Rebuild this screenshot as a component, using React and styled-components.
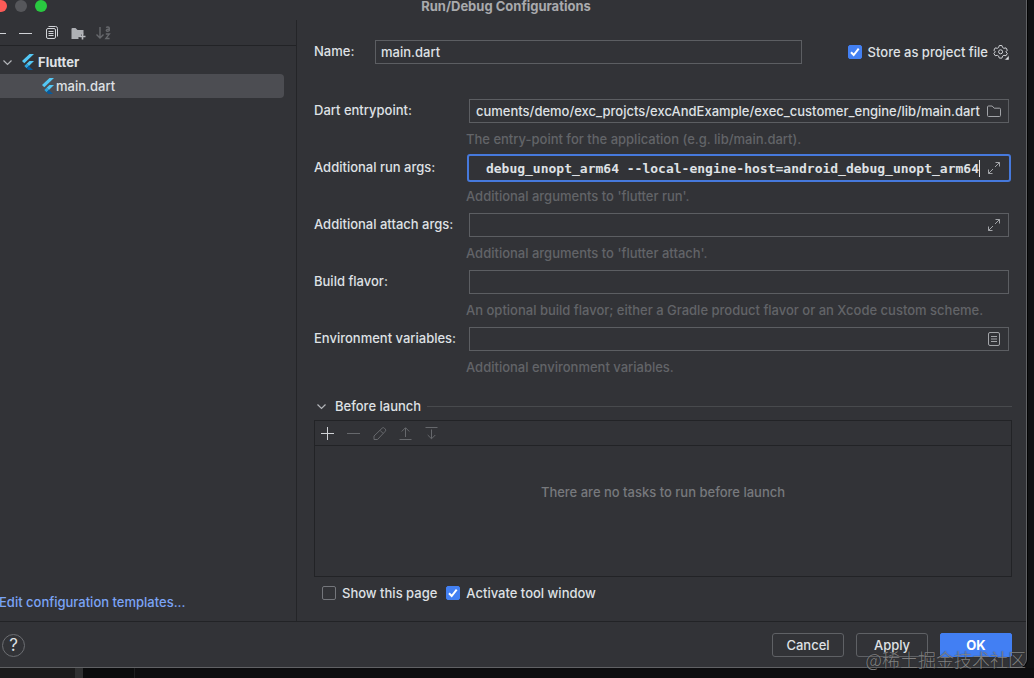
import React from "react";
import styled, { createGlobalStyle } from "styled-components";
import { useState } from "react";

const GlobalStyle = createGlobalStyle`
  * {
    box-sizing: border-box;
  }
  body {
    margin: 0;
    background: #101113;
    color: #dfe1e5;
    font-family: Inter, "Liberation Sans", sans-serif;
    font-size: 13px;
    font-weight: 500;
    line-height: 16px;
  }
`;

const Desktop = styled.div`
  position: relative;
  display: flex;
  flex-direction: column;
  min-height: 100vh;
  overflow: hidden;
`;

const Window = styled.div`
  flex: 1;
  display: flex;
  flex-direction: column;
  margin: 0 7px 0 -15px;
  background: #323337;
  border: solid #606164;
  border-width: 0 1px 1px 0;
  border-radius: 0 0 9px 9px;
  box-shadow: 0 0 0 1px #050505;
`;

const Behind = styled.div`
  display: flex;
  height: 10px;
`;
const BehindPart = styled.div`
  flex: ${(props) => props.$grow || 0} 0 ${(props) => props.$size || 0}px;
  background: ${(props) => props.$color};
`;

const TitleBar = styled.header`
  display: flex;
  align-items: flex-start;
  height: 20px;
  padding-left: 10px;
`;
const Lights = styled.div`
  display: flex;
  flex: 1;
  gap: 8px;
`;
const Light = styled.span`
  width: 12px;
  height: 12px;
  border-radius: 50%;
  background: ${(props) => props.$color};
`;
const Title = styled.h1`
  margin: 0 9px 0 0;
  font-size: 13px;
  font-weight: 700;
  line-height: 12px;
  color: #a9aaad;
`;
const TitleSpacer = styled.div`
  flex: 1;
`;

const Main = styled.div`
  flex: 1;
  display: flex;
`;

const Sidebar = styled.aside`
  display: flex;
  flex-direction: column;
  flex: 0 0 312px;
  border-right: 1px solid #242528;
`;
const Toolbar = styled.div`
  display: flex;
  align-items: center;
  gap: 10px;
  height: ${(props) => props.$height || 26}px;
  padding-left: ${(props) => props.$indent || 6}px;
  border-bottom: 1px solid #222326;
`;
const IconButton = styled.button`
  display: flex;
  width: 16px;
  height: 16px;
  padding: 0;
  border: 0;
  background: none;
  color: ${(props) => (props.disabled ? "#66686c" : "#d0d2d6")};
`;
const Svg = styled.svg`
  display: block;
  flex: none;
  fill: none;
  stroke: currentColor;
  overflow: visible;
`;

const Tree = styled.div`
  flex: 1;
  padding-top: 4px;
`;
const TreeRow = styled.div`
  display: flex;
  align-items: center;
  gap: ${(props) => (props.$selected ? 1 : 3)}px;
  height: 24px;
  margin-right: 12px;
  padding-left: ${(props) => props.$indent}px;
  border-radius: 4px;
  background: ${(props) => (props.$selected ? "#4c4d52" : "none")};
  font-weight: ${(props) => (props.$bold ? 700 : 500)};
`;
const TreeArrow = styled.span`
  width: 13px;
  color: #b4b6ba;
`;
const TemplatesLink = styled.a`
  padding: 0 0 11px 14px;
  color: #7ba4f6;
  text-decoration: none;
`;

const Content = styled.main`
  flex: 1;
  display: flex;
  flex-direction: column;
  min-width: 0;
  padding: 20px 14px 20px 17px;
`;
const NameRow = styled.div`
  display: flex;
  align-items: center;
  margin: 0 3px 35px 0;
`;
const NameLabel = styled.label`
  width: 61px;
  line-height: 22px;
  align-self: flex-start;
`;
const NameField = styled.div`
  flex: 1;
  display: flex;
`;
const StoreOption = styled.div`
  display: flex;
  align-items: center;
  gap: 5px;
  margin-left: 46px;
  color: #c4c6ca;
`;

const Form = styled.form`
  display: grid;
  grid-template-columns: 155px 1fr;
  padding-right: 3px;
`;
const FieldLabel = styled.label`
  line-height: 22px;
`;
const FieldCell = styled.div`
  min-width: 0;
  height: 57px;
`;
const Field = styled.div`
  flex: 1;
  display: flex;
  align-items: center;
  height: 24px;
  padding: 0 6px 0 5px;
  border: 1px solid ${(props) => (props.$active ? "#323337" : "#5c5e62")};
  outline: ${(props) => (props.$active ? "2px solid #4679dc" : "none")};
  border-radius: ${(props) => (props.$active ? 1 : 0)}px;
  color: #a2a4a8;
`;
const Input = styled.input`
  flex: 1;
  min-width: 0;
  height: 20px;
  padding: 0;
  border: 0;
  outline: 0;
  background: none;
  color: #dfe1e5;
  font-family: ${(props) =>
    props.$mono ? '"DejaVu Sans Mono", "Liberation Mono", monospace' : "inherit"};
  font-size: 13px;
  font-weight: ${(props) => (props.$mono ? 700 : 500)};
  text-align: ${(props) => (props.$end ? "right" : "left")};
`;
const Caret = styled.span`
  width: 1px;
  height: 17px;
  background: #dfe1e5;
`;
const FieldIcon = styled.span`
  margin-left: 6px;
`;
const Hint = styled.p`
  margin: 8px 0 0 -3px;
  color: #626468;
  white-space: nowrap;
`;

const SectionTitle = styled.div`
  display: flex;
  align-items: center;
  gap: 6px;
  margin: 14px 0 6px;
  color: #dfe1e5;

  &::after {
    content: "";
    flex: 1;
    border-top: 1px solid #484a4d;
  }
`;
const SectionArrow = styled.span`
  width: 15px;
  padding-left: 3px;
  color: #b4b6ba;
`;
const Tasks = styled.section`
  flex: 1;
  margin-bottom: 8px;
  border: 1px solid #222326;
`;
const NoTasks = styled.p`
  margin: 0;
  padding: 38px 0;
  color: #77797d;
  text-align: center;
`;

const Options = styled.div`
  display: flex;
  gap: 9px;
  padding-left: 8px;
`;
const CheckLabel = styled.label`
  display: flex;
  align-items: center;
  gap: 6px;
  color: #dfe1e5;
`;
const CheckBox = styled.span`
  position: relative;
  width: 14px;
  height: 14px;
  color: #ffffff;
`;
const CheckInput = styled.input`
  appearance: none;
  display: block;
  width: 14px;
  height: 14px;
  margin: 0;
  border: 1px solid #74767b;
  border-radius: 2px;

  &:checked {
    border-color: #4380f2;
    background: #4380f2;
  }
`;
const CheckMark = styled.svg`
  position: absolute;
  inset: 0;
  fill: none;
  stroke: currentColor;
  stroke-width: 2;
  pointer-events: none;
`;

const Footer = styled.footer`
  display: flex;
  align-items: center;
  gap: 12px;
  padding: 11px 14px 10px 17px;
  border-top: 1px solid #222326;
`;
const HelpButton = styled.button`
  width: 23px;
  height: 23px;
  margin-right: auto;
  padding: 0;
  border: 1px solid #6c6e72;
  border-radius: 50%;
  background: none;
  color: #dfe1e5;
  font: 400 17px/20px Inter, "Liberation Sans", sans-serif;
`;
const Button = styled.button`
  width: 72px;
  height: 24px;
  padding: 0;
  border: 1px solid ${(props) => (props.$primary ? "#427ff3" : "#5f6165")};
  border-radius: ${(props) => (props.$primary ? 2 : 3)}px;
  background: ${(props) => (props.$primary ? "#427ff3" : "none")};
  color: ${(props) => (props.$primary ? "#ffffff" : "#dfe1e5")};
  font-family: inherit;
  font-size: 13px;
  font-weight: ${(props) => (props.$primary ? 700 : 500)};
`;

const Watermark = styled.div`
  position: absolute;
  right: 8px;
  bottom: 7px;
  color: rgba(190, 190, 190, 0.6);
  font: 300 18px/24px "Noto Sans CJK SC", sans-serif;
  text-shadow: 0 0 1px #222222;
  pointer-events: none;
`;

const Icon = ({ children, size = 16 }) => (
  <Svg width={size} height={size} viewBox={`0 0 ${size} ${size}`} aria-hidden="true">
    {children}
  </Svg>
);

const PlusIcon = () => (
  <Icon>
    <path d="M2 8.5h13M8.5 2v13" />
  </Icon>
);
const MinusIcon = () => (
  <Icon>
    <path d="M2 8.5h13" />
  </Icon>
);
const CopyIcon = () => (
  <Icon>
    <rect x="3.5" y="3.5" width="9" height="10" rx="1.5" />
    <path d="M5.5 1.5h7a2 2 0 0 1 2 2v8M5.5 6.500h5M5.5 8.500h5M5.5 10.500h5" />
  </Icon>
);
const NewFolderIcon = () => (
  <Icon>
    <path
      d="M2.500 4a1 1 0 0 1 1-1h3l2 2h6v4.500H12v2.500H9.500v2h-7z"
      fill="#aeb0b4"
      stroke="none"
    />
    <path d="M13.500 8.500v6M10.500 11.500h6" stroke="#b9bbbf" strokeWidth="1.600" />
  </Icon>
);
const SortIcon = () => (
  <Icon>
    <path d="M5 2v11M1.500 9.500L5 13l3.500-3.500" strokeWidth="1.400" />
    <path
      d="M11.300 2.700c.4-1 3-1 3 .4v3M14.300 4.300c-3.400-.3-3.800 2-2 2 1 0 2-.6 2-1.400M10.800 9h3.600l-3.600 4.500h3.800"
      strokeWidth="1.300"
    />
  </Icon>
);
const PencilIcon = () => (
  <Icon>
    <path d="M3 14.500v-3.500L11.200 3.100a1.500 1.500 0 0 1 2.100 0l1 1a1.500 1.500 0 0 1 0 2.100L6.500 14.500zM9 5.300l3.200 3.200" />
  </Icon>
);
const UpIcon = () => (
  <Icon>
    <path d="M8.500 12V3M4.700 6.500L8.500 2.700l3.800 3.800M2.500 14.500h12" />
  </Icon>
);
const DownIcon = () => (
  <Icon>
    <path d="M8.500 4.500v9M4.700 10l3.800 3.800L12.300 10M2.500 2.500h12" />
  </Icon>
);
const ChevronIcon = () => (
  <Icon size={9}>
    <path d="M.5 2.500l4 4 4-4" strokeWidth="1.200" />
  </Icon>
);
const FolderIcon = () => (
  <Icon>
    <path d="M1.500 4a1 1 0 0 1 1-1h3.700l2 2.200h5.300a1 1 0 0 1 1 1V12.500a1 1 0 0 1-1 1h-11a1 1 0 0 1-1-1z" />
  </Icon>
);
const ExpandIcon = () => (
  <Icon>
    <path d="M9 7l4.500-4.500M9.500 2.500h4v4M7 9l-4.500 4.500M2.500 9.500v4h4" />
  </Icon>
);
const ListIcon = () => (
  <Icon>
    <rect x="2.500" y="1.500" width="11" height="13" rx="1.500" />
    <path d="M5 5.500h6M5 8h6M5 10.500h6" />
  </Icon>
);
const GearIcon = () => (
  <Icon>
    <path
      d="M6.300 1.500h2.600l.7 2 1.300.8 2.100-.4 1.300 2.300L12.900 7.800l1.400 1.700-1.300 2.200-2.100-.4-1.300.8-.7 2H6.300l-.7-2-1.300-.8-2.100.4L.9 9.500l1.400-1.700L.9 6.200l1.300-2.300 2.100.4 1.300-.8z"
      strokeLinejoin="round"
    />
    <circle cx="7.600" cy="7.800" r="2" />
    <path d="M16 11.500V16h-4.500z" fill="#dfe1e5" stroke="#323337" strokeWidth=".5" />
  </Icon>
);
const FlutterIcon = () => (
  <Icon>
    <path d="M10.500 0H15L5.300 9.300 3 7z" fill="#54c8f5" stroke="none" />
    <path d="M10.500 7H15L9.900 12 7.600 9.700z" fill="#54c8f5" stroke="none" />
    <path d="M7.600 9.700L9.900 12l-2.300 2.300L5.300 12z" fill="#2ba5e0" stroke="none" />
    <path d="M7.600 14.300L9.900 12l4.100 4H9.300z" fill="#075b9d" stroke="none" />
  </Icon>
);

const Checkbox = ({ label, initial }) => {
  const [checked, setChecked] = useState(initial);
  return (
    <CheckLabel>
      <CheckBox>
        <CheckInput
          type="checkbox"
          checked={checked}
          onChange={(e) => setChecked(e.target.checked)}
        />
        {checked && (
          <CheckMark width="14" height="14" viewBox="0 0 14 14">
            <path d="M3 7.200l2.700 2.800L10.700 3.700" />
          </CheckMark>
        )}
      </CheckBox>
      {label}
    </CheckLabel>
  );
};

const fields = [
  {
    id: "entrypoint",
    label: "Dart entrypoint:",
    value: "cuments/demo/exc_projcts/excAndExample/exec_customer_engine/lib/main.dart",
    hint: "The entry-point for the application (e.g. lib/main.dart).",
    icon: <FolderIcon />,
  },
  {
    id: "runArgs",
    label: "Additional run args:",
    value: "debug_unopt_arm64 --local-engine-host=android_debug_unopt_arm64",
    hint: "Additional arguments to 'flutter run'.",
    icon: <ExpandIcon />,
    active: true,
  },
  {
    id: "attachArgs",
    label: "Additional attach args:",
    value: "",
    hint: "Additional arguments to 'flutter attach'.",
    icon: <ExpandIcon />,
  },
  {
    id: "flavor",
    label: "Build flavor:",
    value: "",
    hint: "An optional build flavor; either a Gradle product flavor or an Xcode custom scheme.",
  },
  {
    id: "env",
    label: "Environment variables:",
    value: "",
    hint: "Additional environment variables.",
    icon: <ListIcon />,
  },
];

const App = () => {
  return (
    <Desktop>
      <GlobalStyle />
      <Window>
        <TitleBar>
          <Lights>
            <Light $color="#fc5b57" />
            <Light $color="#56575b" />
            <Light $color="#29c940" />
          </Lights>
          <Title>Run/Debug Configurations</Title>
          <TitleSpacer />
        </TitleBar>
        <Main>
          <Sidebar>
            <Toolbar>
              <IconButton aria-label="Add"><PlusIcon /></IconButton>
              <IconButton aria-label="Remove"><MinusIcon /></IconButton>
              <IconButton aria-label="Copy"><CopyIcon /></IconButton>
              <IconButton aria-label="New folder"><NewFolderIcon /></IconButton>
              <IconButton aria-label="Sort" disabled><SortIcon /></IconButton>
            </Toolbar>
            <Tree>
              <TreeRow $indent={18} $bold>
                <TreeArrow><ChevronIcon /></TreeArrow>
                <FlutterIcon />
                Flutter
              </TreeRow>
              <TreeRow $indent={54} $selected>
                <FlutterIcon />
                main.dart
              </TreeRow>
            </Tree>
            <TemplatesLink href="#templates">Edit configuration templates...</TemplatesLink>
          </Sidebar>
          <Content>
            <NameRow>
              <NameLabel htmlFor="name">Name:</NameLabel>
              <NameField>
                <Field>
                  <Input id="name" defaultValue="main.dart" />
                </Field>
              </NameField>
              <StoreOption>
                <Checkbox label="Store as project file" initial={true} />
                <IconButton aria-label="Storage settings"><GearIcon /></IconButton>
              </StoreOption>
            </NameRow>
            <Form>
              {fields.map((field) => (
                <React.Fragment key={field.id}>
                  <FieldLabel htmlFor={field.id}>{field.label}</FieldLabel>
                  <FieldCell>
                    <Field $active={field.active}>
                      <Input
                        id={field.id}
                        defaultValue={field.value}
                        $mono={field.active}
                        $end={field.value !== ""}
                      />
                      {field.active && <Caret />}
                      {field.icon && <FieldIcon>{field.icon}</FieldIcon>}
                    </Field>
                    <Hint>{field.hint}</Hint>
                  </FieldCell>
                </React.Fragment>
              ))}
            </Form>
            <SectionTitle>
              <SectionArrow><ChevronIcon /></SectionArrow>
              Before launch
            </SectionTitle>
            <Tasks>
              <Toolbar $height={25} $indent={4}>
                <IconButton aria-label="Add task"><PlusIcon /></IconButton>
                <IconButton aria-label="Remove task" disabled><MinusIcon /></IconButton>
                <IconButton aria-label="Edit task" disabled><PencilIcon /></IconButton>
                <IconButton aria-label="Move up" disabled><UpIcon /></IconButton>
                <IconButton aria-label="Move down" disabled><DownIcon /></IconButton>
              </Toolbar>
              <NoTasks>There are no tasks to run before launch</NoTasks>
            </Tasks>
            <Options>
              <Checkbox label="Show this page" initial={false} />
              <Checkbox label="Activate tool window" initial={true} />
            </Options>
          </Content>
        </Main>
        <Footer>
          <HelpButton aria-label="Help">?</HelpButton>
          <Button>Cancel</Button>
          <Button>Apply</Button>
          <Button $primary>OK</Button>
        </Footer>
      </Window>
      <Behind>
        <BehindPart $size={75} $color="#1b1b1c" />
        <BehindPart $size={8} $color="#2f3031" />
        <BehindPart $size={51} $color="#0b0c0d" />
        <BehindPart $size={1} $color="#1d1e1f" />
        <BehindPart $grow={1} $color="#0d0d0f" />
      </Behind>
      <Watermark>@稀土掘金技术社区</Watermark>
    </Desktop>
  );
};

export default App;
